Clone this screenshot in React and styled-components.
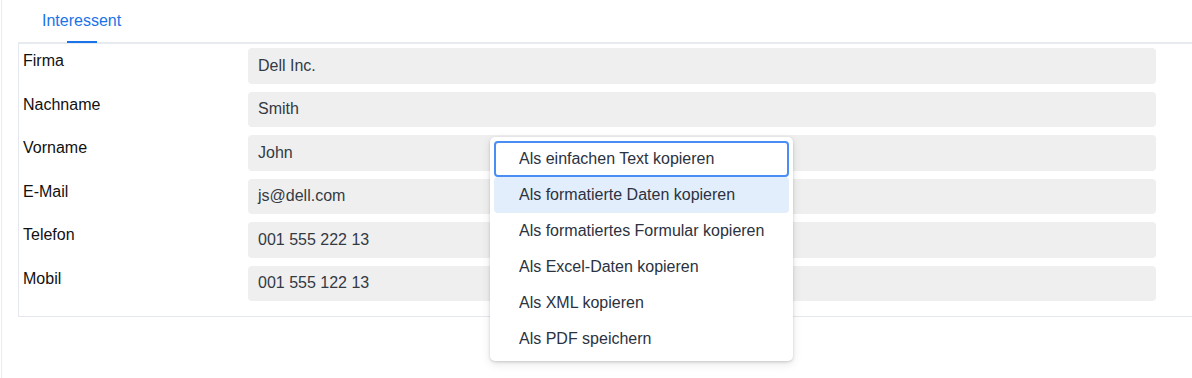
import React from "react";
import styled, { createGlobalStyle } from "styled-components";

const Global = createGlobalStyle`
  html, body { margin: 0; padding: 0; background: #fff; }
  body { font-family: "Liberation Sans", Arial, sans-serif; font-size: 16px; }
  #root { width: 1192px; height: 378px; overflow: hidden; }
`;

const Page = styled.div`
  position: relative;
  margin-left: 1px;
  height: 378px;
  border-left: 1px solid #ececef;
  overflow: hidden;
`;

const TabBar = styled.div`
  display: flex;
  height: 42px;
  margin-left: 16px;
  padding-left: 24px;
  border-bottom: 2px solid #e7ebf0;
  box-sizing: content-box;
`;

const Tab = styled.div`
  position: relative;
  display: flex;
  align-items: flex-start;
  padding: 12px 0 0;
  line-height: 18px;
  font-size: 16px;
  color: ${(p) => (p.$active ? "#1a73e8" : "#444")};
  &::after {
    content: "";
    display: ${(p) => (p.$active ? "block" : "none")};
    position: absolute;
    left: 50%;
    bottom: -1px;
    width: 30px;
    height: 2px;
    margin-left: -15px;
    background: #1a73e8;
  }
`;

const Panel = styled.div`
  margin-left: 16px;
  width: 1300px;
  border-left: 1px solid #e5e7ee;
  border-bottom: 1px solid #e5e7ee;
  padding: 4px 0 15px 4px;
  display: flex;
  flex-direction: column;
  gap: 8px;
`;

const Row = styled.div`
  display: grid;
  grid-template-columns: 225px 908px;
  align-items: start;
`;

const Label = styled.div`
  padding-top: 4px;
  line-height: 18px;
  color: #111;
  font-size: 16px;
`;

const Field = styled.div`
  height: 35.5px;
  box-sizing: border-box;
  display: flex;
  align-items: center;
  padding: 0 10px;
  background: #efefef;
  border-radius: 4px;
  color: #333a44;
  font-size: 16px;
`;

const Menu = styled.div`
  position: absolute;
  left: 488px;
  top: 137px;
  width: 303px;
  box-sizing: border-box;
  padding: 4px;
  background: #fff;
  border-radius: 5px;
  box-shadow: 0 1px 3px rgba(0, 0, 0, 0.16), 0 3px 10px rgba(0, 0, 0, 0.1);
  display: flex;
  flex-direction: column;
`;

const Item = styled.div`
  height: 36px;
  box-sizing: border-box;
  display: flex;
  align-items: center;
  padding: 0 0 0 ${(p) => (p.$focused ? 23 : 25)}px;
  border-radius: 4px;
  color: #2b3240;
  font-size: 16px;
  background: ${(p) => (p.$hover ? "#e3eefc" : "transparent")};
  border: ${(p) => (p.$focused ? "2px solid #4a8ef5" : "none")};
`;

const fields = [
  ["Firma", "Dell Inc."],
  ["Nachname", "Smith"],
  ["Vorname", "John"],
  ["E-Mail", "js@dell.com"],
  ["Telefon", "001 555 222 13"],
  ["Mobil", "001 555 122 13"],
];

const items = [
  "Als einfachen Text kopieren",
  "Als formatierte Daten kopieren",
  "Als formatiertes Formular kopieren",
  "Als Excel-Daten kopieren",
  "Als XML kopieren",
  "Als PDF speichern",
];

export default function App() {
  return (
    <>
      <Global />
      <Page>
        <TabBar>
          <Tab $active>Interessent</Tab>
        </TabBar>
        <Panel>
          {fields.map(([l, v]) => (
            <Row key={l}>
              <Label>{l}</Label>
              <Field>{v}</Field>
            </Row>
          ))}
        </Panel>
        <Menu>
          {items.map((t, i) => (
            <Item key={t} $focused={i === 0} $hover={i === 1}>
              {t}
            </Item>
          ))}
        </Menu>
      </Page>
    </>
  );
}
